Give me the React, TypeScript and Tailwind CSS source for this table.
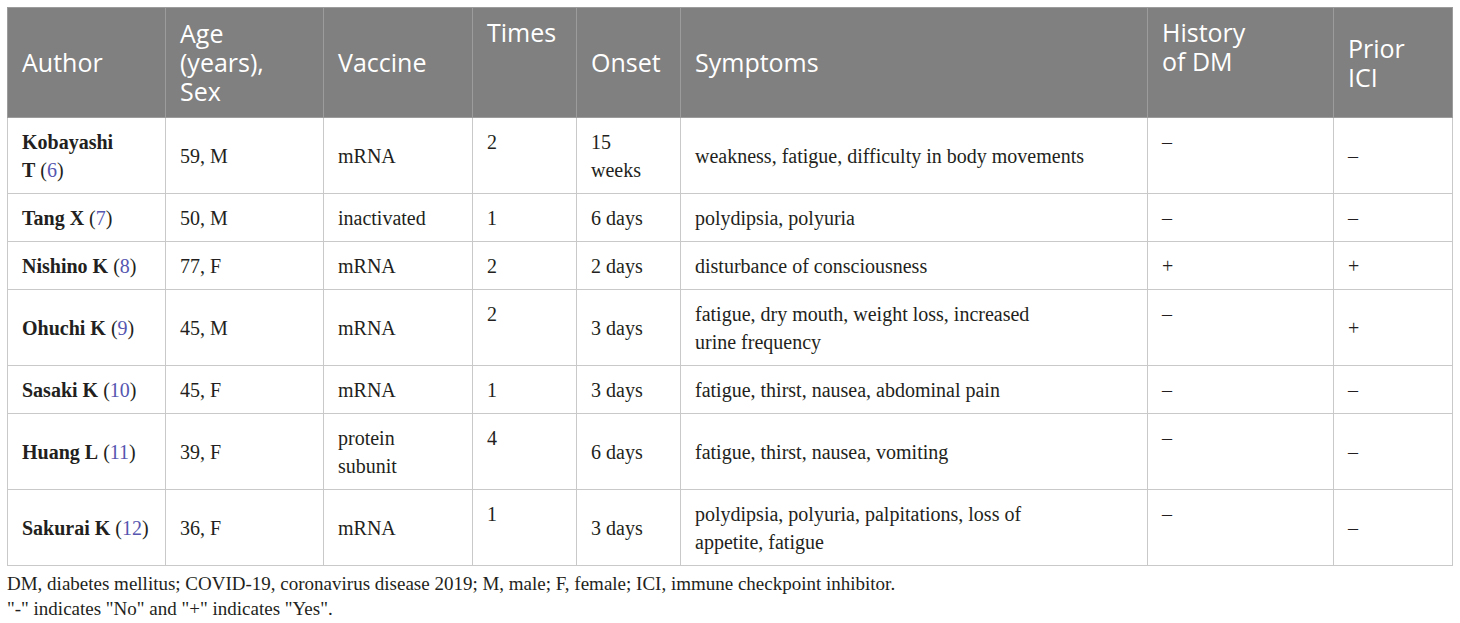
import React from 'react';

type Row = {
  name: React.ReactNode;
  refNo: string;
  age: string;
  vaccine: React.ReactNode;
  times: string;
  onset: React.ReactNode;
  symptoms: React.ReactNode;
  dm: string;
  ici: string;
  tall?: boolean;
};

const rows: Row[] = [
  {
    name: (
      <>
        Kobayashi
        <br />T
      </>
    ),
    refNo: '6',
    age: '59, M',
    vaccine: 'mRNA',
    times: '2',
    onset: (
      <>
        15
        <br />
        weeks
      </>
    ),
    symptoms: 'weakness, fatigue, difficulty in body movements',
    dm: '–',
    ici: '–',
    tall: true,
  },
  { name: 'Tang X', refNo: '7', age: '50, M', vaccine: 'inactivated', times: '1', onset: '6 days', symptoms: 'polydipsia, polyuria', dm: '–', ici: '–' },
  { name: 'Nishino K', refNo: '8', age: '77, F', vaccine: 'mRNA', times: '2', onset: '2 days', symptoms: 'disturbance of consciousness', dm: '+', ici: '+' },
  {
    name: 'Ohuchi K',
    refNo: '9',
    age: '45, M',
    vaccine: 'mRNA',
    times: '2',
    onset: '3 days',
    symptoms: (
      <>
        fatigue, dry mouth, weight loss, increased
        <br />
        urine frequency
      </>
    ),
    dm: '–',
    ici: '+',
    tall: true,
  },
  { name: 'Sasaki K', refNo: '10', age: '45, F', vaccine: 'mRNA', times: '1', onset: '3 days', symptoms: 'fatigue, thirst, nausea, abdominal pain', dm: '–', ici: '–' },
  {
    name: 'Huang L',
    refNo: '11',
    age: '39, F',
    vaccine: (
      <>
        protein
        <br />
        subunit
      </>
    ),
    times: '4',
    onset: '6 days',
    symptoms: 'fatigue, thirst, nausea, vomiting',
    dm: '–',
    ici: '–',
    tall: true,
  },
  {
    name: 'Sakurai K',
    refNo: '12',
    age: '36, F',
    vaccine: 'mRNA',
    times: '1',
    onset: '3 days',
    symptoms: (
      <>
        polydipsia, polyuria, palpitations, loss of
        <br />
        appetite, fatigue
      </>
    ),
    dm: '–',
    ici: '–',
    tall: true,
  },
];

const th = 'border border-[#9c9c9c] px-[14px] py-[10px] text-left font-normal';
const td = 'border border-[#c9c9c9] px-[14px] py-[9px]';

export default function App() {
  return (
    <div className="bg-white p-[7px] text-[#231f20]">
      <table className="w-[1445px] table-fixed border-collapse">
        <colgroup>
          <col className="w-[158px]" />
          <col className="w-[158px]" />
          <col className="w-[149px]" />
          <col className="w-[104px]" />
          <col className="w-[104px]" />
          <col className="w-[467px]" />
          <col className="w-[186px]" />
          <col className="w-[119px]" />
        </colgroup>
        <thead>
          <tr className="h-[110px] bg-[#808080] text-white text-[25px] leading-[29px] font-['Open_Sans',sans-serif]">
            <th className={`${th} align-middle`}>Author</th>
            <th className={`${th} align-middle`}>
              Age
              <br />
              (years),
              <br />
              Sex
            </th>
            <th className={`${th} align-middle`}>Vaccine</th>
            <th className={`${th} align-top`}>Times</th>
            <th className={`${th} align-middle`}>Onset</th>
            <th className={`${th} align-middle`}>Symptoms</th>
            <th className={`${th} align-top`}>
              History
              <br />
              of DM
            </th>
            <th className={`${th} align-middle`}>
              Prior
              <br />
              ICI
            </th>
          </tr>
        </thead>
        <tbody className="font-['Liberation_Serif',serif] text-[20px] leading-[28px]">
          {rows.map((r) => (
            <tr key={r.refNo} className={r.tall ? 'h-[76px]' : 'h-[48px]'}>
              <td className={`${td} align-middle`}>
                <span className="font-bold">{r.name}</span> (<span className="text-[#5656b0]">{r.refNo}</span>)
              </td>
              <td className={`${td} align-middle`}>{r.age}</td>
              <td className={`${td} align-middle`}>{r.vaccine}</td>
              <td className={`${td} align-top pt-[10px]`}>{r.times}</td>
              <td className={`${td} align-middle`}>{r.onset}</td>
              <td className={`${td} align-middle`}>{r.symptoms}</td>
              <td className={`${td} align-top pt-[10px]`}>{r.dm}</td>
              <td className={`${td} align-middle`}>{r.ici}</td>
            </tr>
          ))}
        </tbody>
      </table>
      <div className="mt-[5px] font-['Liberation_Serif',serif] text-[19px] leading-[25px]">
        <p>DM, diabetes mellitus; COVID-19, coronavirus disease 2019; M, male; F, female; ICI, immune checkpoint inhibitor.</p>
        <p>"-" indicates "No" and "+" indicates "Yes".</p>
      </div>
    </div>
  );
}
